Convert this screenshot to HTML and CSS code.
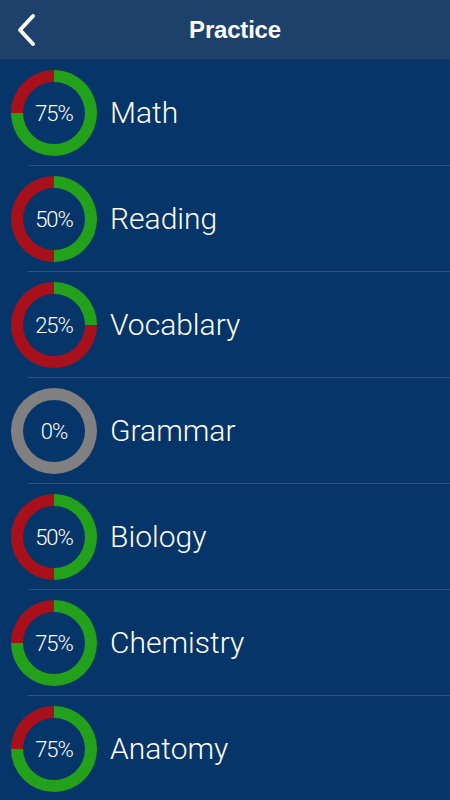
FILE: index.html
```html
<!DOCTYPE html>
<html lang="en">
<head>
    <meta charset="UTF-8">
    <meta name="viewport" content="width=device-width, initial-scale=1.0">
    <title>Practice</title>
    <link rel="stylesheet" href="styles.css">
</head>
<body>
    <div class="app">
        <header class="top-bar">
            <a class="back-btn" href="#" aria-label="Back">
                <svg width="24" height="36" viewBox="0 0 24 36">
                    <polyline points="17,4 4,18 17,32" fill="none" stroke="#fff" stroke-width="4" stroke-linecap="round" stroke-linejoin="round"/>
                </svg>
            </a>
            <h1 class="title">Practice</h1>
            <span class="spacer"></span>
        </header>

        <ul class="subject-list">
            <li class="subject-row">
                <div class="ring" style="--p: 75%"><span class="ring-label">75%</span></div>
                <span class="subject-name">Math</span>
            </li>
            <li class="subject-row">
                <div class="ring" style="--p: 50%"><span class="ring-label">50%</span></div>
                <span class="subject-name">Reading</span>
            </li>
            <li class="subject-row">
                <div class="ring" style="--p: 25%"><span class="ring-label">25%</span></div>
                <span class="subject-name">Vocablary</span>
            </li>
            <li class="subject-row">
                <div class="ring empty"><span class="ring-label">0%</span></div>
                <span class="subject-name">Grammar</span>
            </li>
            <li class="subject-row">
                <div class="ring" style="--p: 50%"><span class="ring-label">50%</span></div>
                <span class="subject-name">Biology</span>
            </li>
            <li class="subject-row">
                <div class="ring" style="--p: 75%"><span class="ring-label">75%</span></div>
                <span class="subject-name">Chemistry</span>
            </li>
            <li class="subject-row">
                <div class="ring" style="--p: 75%"><span class="ring-label">75%</span></div>
                <span class="subject-name">Anatomy</span>
            </li>
        </ul>
    </div>
</body>
</html>
```

FILE: styles.css
```css
body {
    margin: 0;
    background-color: #06356a;
    font-family: 'Roboto', 'Liberation Sans', sans-serif;
    color: #fff;
}

.app {
    width: 450px;
    height: 800px;
    overflow: hidden;
}

/* Top navigation bar */
.top-bar {
    height: 60px;
    display: flex;
    align-items: center;
    background-color: #1d416b;
    box-sizing: border-box;
    border-bottom: 1px solid #12355f;
}

.back-btn {
    width: 50px;
    display: flex;
    justify-content: flex-start;
    padding-left: 16px;
    box-sizing: border-box;
}

.back-btn svg {
    display: block;
}

.title {
    flex: 1;
    margin: 0;
    text-align: center;
    font-family: 'Liberation Sans', Arial, sans-serif;
    font-weight: 700;
    font-size: 24px;
    letter-spacing: -0.2px;
}

.spacer {
    width: 30px;
}

/* Subject list */
.subject-list {
    list-style: none;
    margin: 0;
    padding: 0;
}

.subject-row {
    height: 106px;
    display: flex;
    align-items: center;
    padding-left: 11px;
    position: relative;
}

/* divider starts a bit in from the left edge */
.subject-row::after {
    content: '';
    position: absolute;
    left: 28px;
    right: 0;
    bottom: 0;
    height: 1px;
    background-color: #2a5484;
}

.ring {
    width: 86px;
    height: 86px;
    border-radius: 50%;
    background: conic-gradient(#23a11b 0 var(--p), #a8111b var(--p) 100%);
    display: flex;
    align-items: center;
    justify-content: center;
    flex-shrink: 0;
}

.ring.empty {
    background: #808080;
}

.ring-label {
    width: 62px;
    height: 62px;
    border-radius: 50%;
    background-color: #06356a;
    display: flex;
    align-items: center;
    justify-content: center;
    font-size: 22px;
    font-weight: 300;
    letter-spacing: -1px;
}

.subject-name {
    margin-left: 13px;
    font-size: 30px;
    font-weight: 300;
    padding-bottom: 2px;
}
```
